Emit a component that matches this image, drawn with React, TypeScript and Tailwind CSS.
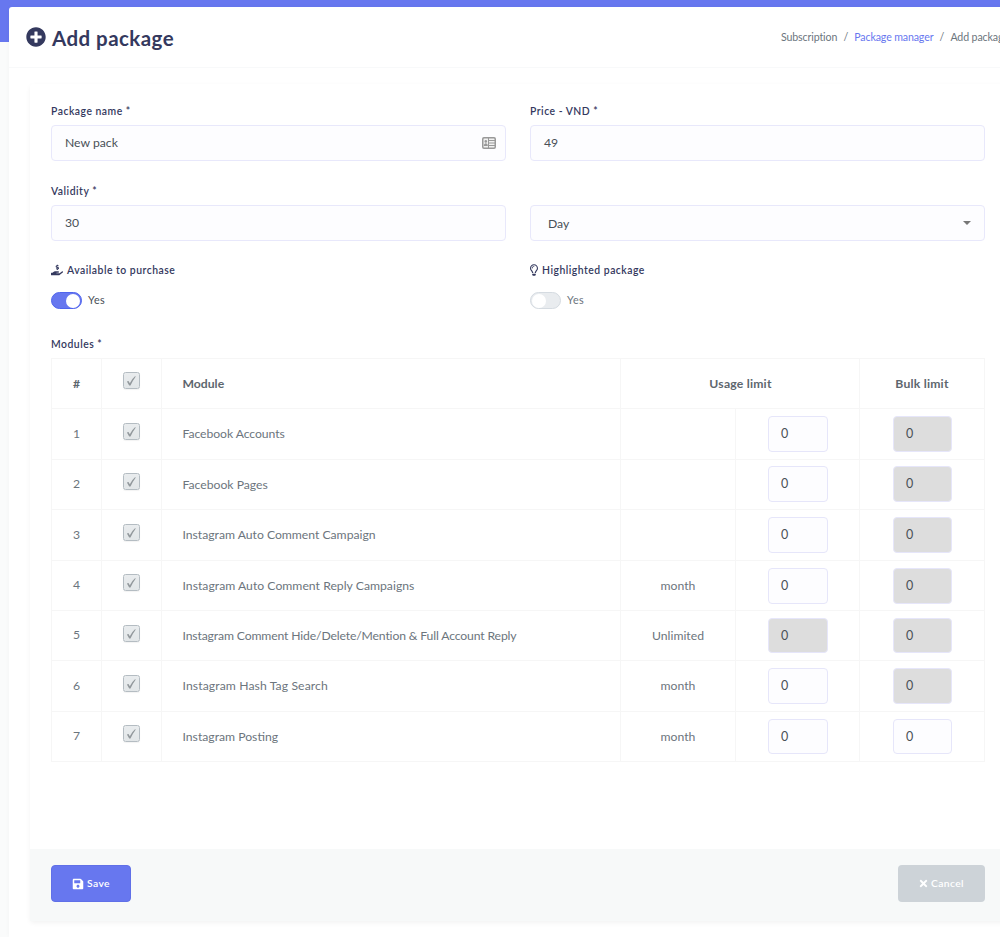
import React from "react";
import { FaPlusCircle, FaHandHoldingUsd, FaRegLightbulb, FaSave, FaTimes } from "react-icons/fa";

type Row = {
  name: string;
  spacing: string;
  unit: string;
  usageLocked?: boolean;
  bulkLocked: boolean;
  height: string;
  checkTop: string;
  inputTop: string;
  inputHeight: string;
};

const rows: Row[] = [
  { name: "Facebook Accounts", spacing: "tracking-[-0.07px]", unit: "", bulkLocked: true, height: "h-[51px]", checkTop: "pt-[14px]", inputTop: "pt-[7px]", inputHeight: "h-[36px]" },
  { name: "Facebook Pages", spacing: "", unit: "", bulkLocked: true, height: "h-[50px]", checkTop: "pt-[13px]", inputTop: "pt-[6px]", inputHeight: "h-[36px]" },
  { name: "Instagram Auto Comment Campaign", spacing: "tracking-[-0.01px]", unit: "", bulkLocked: true, height: "h-[51px]", checkTop: "pt-[14px]", inputTop: "pt-[7px]", inputHeight: "h-[36px]" },
  { name: "Instagram Auto Comment Reply Campaigns", spacing: "tracking-[0.02px]", unit: "month", bulkLocked: true, height: "h-[50px]", checkTop: "pt-[13px]", inputTop: "pt-[7px]", inputHeight: "h-[36px]" },
  { name: "Instagram Comment Hide/Delete/Mention & Full Account Reply", spacing: "tracking-[-0.145px]", unit: "Unlimited", usageLocked: true, bulkLocked: true, height: "h-[50px]", checkTop: "pt-[14px]", inputTop: "pt-[7px]", inputHeight: "h-[35px]" },
  { name: "Instagram Hash Tag Search", spacing: "tracking-[0.1px]", unit: "month", bulkLocked: true, height: "h-[51px]", checkTop: "pt-[14px]", inputTop: "pt-[7px]", inputHeight: "h-[36px]" },
  { name: "Instagram Posting", spacing: "", unit: "month", bulkLocked: false, height: "h-[50px]", checkTop: "pt-[13px]", inputTop: "pt-[7px]", inputHeight: "h-[35px]" },
];

const columns = "grid grid-cols-[50px_60px_459px_115px_124px_125px]";

function Label({ icon, children }: { icon?: React.ReactNode; children: React.ReactNode }) {
  return (
    <div className="flex h-4 items-center whitespace-nowrap text-[10.4px] font-semibold tracking-[0.5px] text-[#34395e]">
      {icon}
      <span className="pt-[2px]">{children}</span>
    </div>
  );
}

function Field({ value, children }: { value: string; children?: React.ReactNode }) {
  return (
    <div className="flex h-9 items-center justify-between rounded-[4px] border border-[#e8e8fb] bg-[#fdfdff] pr-[8px] pl-[13px] text-[12.2px] text-[#495057]">
      <span>{value}</span>
      {children}
    </div>
  );
}

function ContactCard() {
  return (
    <svg viewBox="0 0 14 12" className="mr-px h-[12px] w-[14px]">
      <rect x="0.75" y="0.75" width="12.5" height="10.5" rx="1.2" fill="#f1f1f1" stroke="#999999" strokeWidth="1.5" />
      <path d="M6.5 1v10" stroke="#999999" strokeWidth="1" />
      <path d="M7 3.5h6M7 6h6M7 8.500h6" stroke="#999999" strokeWidth="1.1" />
      <circle cx="3.800" cy="4.400" r="1.300" fill="#999999" />
      <path d="M1.800 9c0-3.600 4-3.600 4 0z" fill="#999999" />
    </svg>
  );
}

function Check() {
  return (
    <span className="flex size-[17px] shrink-0 items-center justify-center rounded-[2.5px] border border-[#b4bcc2] bg-gradient-to-b from-[#e9ecee] to-[#e2e6e8] shadow-[0_1px_1px_rgba(0,0,0,0.05)]">
      <svg viewBox="0 0 17 17" className="size-[17px] shrink-0">
        <path d="M3.9 9.600 L5.500 9 L6.800 11.200 Q8.800 6.900 12 4.200 L12.800 4.500 Q9.700 8.600 7.500 13.600 L6.200 13.600 Z" fill="#92989c" />
      </svg>
    </span>
  );
}

function Amount({ locked, size }: { locked?: boolean; size: string }) {
  return (
    <span className={`${size} ${locked ? "bg-[#dddddd]" : "bg-[#fdfdff]"} flex items-center rounded-[4px] border border-[#e6e6fa] pt-px pl-[12px] text-[12.5px] text-[#495057]`}>
      0
    </span>
  );
}

function Switch({ on }: { on: boolean }) {
  return (
    <span className={`${on ? "justify-end border-[#5065ee] bg-[#6777ef]" : "justify-start border-[#d5dbe1] bg-[#e9ecef]"} flex h-[17px] w-[31px] items-center rounded-full border px-px`}>
      <span className="size-[14px] rounded-full bg-white" />
    </span>
  );
}

export default function App() {
  return (
    <div className="h-[937px] w-[1000px] overflow-hidden bg-[#fafbfb] bg-[linear-gradient(#6777ef_42px,transparent_42px)] pt-[7px] pl-[9px] font-['Lato',sans-serif]">
      <div className="h-[930px] w-[1011px] rounded-tl-[3px] bg-white shadow-[0_0_5px_rgba(0,0,0,0.03)]">
        <header className="flex h-[61px] items-center border-b border-[#f8f9fa] pl-[17px]">
          <FaPlusCircle className="size-[20px] text-[#34395e]" />
          <h1 className="ml-[6px] w-[300px] whitespace-nowrap pt-[2px] text-[20.5px] leading-6 font-bold tracking-[0.45px] text-[#34395e]">Add package</h1>
          <nav className="ml-auto flex w-[239px] gap-[6.2px] whitespace-nowrap pt-[2px] text-[10.6px] tracking-[-0.12px] text-[#6c757d]">
            <span>Subscription</span>
            <span>/</span>
            <span className="text-[#6777ef]">Package manager</span>
            <span>/</span>
            <span>Add package</span>
          </nav>
        </header>

        <main className="mt-[16px] ml-[21px] flex h-[837px] flex-col rounded-[3px] bg-white shadow-[0_2px_5px_rgba(0,0,0,0.05)]">
          <div className="h-[765px] w-[955px] pt-[19px] pl-[21px]">
            <div className="grid w-[934px] grid-cols-[455px_455px] gap-x-6">
              <div>
                <Label>Package name *</Label>
                <div className="h-[6px]" />
                <Field value="New pack"><ContactCard /></Field>
              </div>
              <div>
                <Label>Price - VND *</Label>
                <div className="h-[6px]" />
                <Field value="49" />
              </div>
            </div>
            <div className="mt-[22px] grid w-[934px] grid-cols-[455px_455px] gap-x-6">
              <div>
                <Label>Validity *</Label>
                <div className="h-[6px]" />
                <Field value="30" />
              </div>
              <div className="pt-[22px]">
                <div className="flex h-9 items-center justify-between rounded-[4px] border border-[#e8e8fb] bg-[#fdfdff] pr-[13px] pl-[17px] text-[12.2px] text-[#495057]">
                  <span className="pt-[2px]">Day</span>
                  <span className="border-x-[4px] border-t-[4px] border-x-transparent border-t-[#777777]" />
                </div>
              </div>
            </div>
            <div className="mt-[21px] grid w-[934px] grid-cols-[455px_455px] gap-x-6">
              <div>
                <Label icon={<FaHandHoldingUsd className="mr-[4px] size-[12px]" />}>Available to purchase</Label>
                <div className="mt-[14px] flex items-center gap-[6px] text-[10.8px] tracking-[0.35px] text-[#495057]"><Switch on />Yes</div>
              </div>
              <div>
                <Label icon={<FaRegLightbulb className="mr-[4px] h-[12px] w-[8px]" />}>Highlighted package</Label>
                <div className="mt-[14px] flex items-center gap-[6px] text-[10.8px] tracking-[0.35px] text-[#6c757d]"><Switch on={false} />Yes</div>
              </div>
            </div>
            <div className="mt-[27px]"><Label>Modules *</Label></div>

            <div className="mt-[6px] w-[934px] border-r border-b border-[#f6f6f6] text-[12.2px] text-[#6c757d]">
              <div className="grid h-[50px] grid-cols-[50px_60px_459px_239px_125px] border-t border-[#f6f6f6] font-bold text-[#5d666e]">
                <div className="flex items-center justify-center border-l border-[#f6f6f6] pt-px">#</div>
                <div className="flex justify-center border-l border-[#f6f6f6] pt-[13px]"><Check /></div>
                <div className="flex items-center border-l border-[#f6f6f6] pt-px pl-[20.5px]">Module</div>
                <div className="flex items-center justify-center border-l border-[#f6f6f6] pt-px pl-px tracking-[0.2px]">Usage limit</div>
                <div className="flex items-center justify-center border-l border-[#f6f6f6] pt-px tracking-[0.2px]">Bulk limit</div>
              </div>
              {rows.map((row, i) => (
                <div key={row.name} className={`${columns} ${row.height} border-t border-[#f6f6f6]`}>
                  <div className="flex items-center justify-center border-l border-[#f6f6f6]">{i + 1}</div>
                  <div className={`${row.checkTop} flex justify-center border-l border-[#f6f6f6]`}><Check /></div>
                  <div className="flex items-center whitespace-nowrap border-l border-[#f6f6f6] pt-px pl-[20.5px]"><span className={row.spacing}>{row.name}</span></div>
                  <div className="flex items-center justify-center border-l border-[#f6f6f6] pt-px">{row.unit}</div>
                  <div className={`${row.inputTop} flex items-start border-l border-[#f6f6f6] pl-[32px]`}><Amount locked={row.usageLocked} size={`w-[60px] ${row.inputHeight}`} /></div>
                  <div className={`${row.inputTop} flex items-start border-l border-[#f6f6f6] pl-[33px]`}><Amount locked={row.bulkLocked} size={`w-[59px] ${row.inputHeight}`} /></div>
                </div>
              ))}
            </div>
          </div>
          <footer className="flex h-[72px] items-start justify-between bg-[#f7f9f9] pt-[16px] pr-[35px] pl-[21px]">
            <button className="flex h-[37px] w-[80px] items-center justify-center gap-[3px] rounded-[4px] border border-[#6070e8] bg-[#6777ef] text-[10.3px] font-semibold tracking-[0.4px] text-white"><FaSave className="size-[12px]" />Save</button>
            <button className="flex h-[37px] w-[87px] items-center justify-center gap-[2px] rounded-[4px] bg-[#cdd3d8] pr-px text-[10.3px] font-semibold tracking-[0.4px] text-white"><FaTimes className="size-[11px]" />Cancel</button>
          </footer>
        </main>
      </div>
    </div>
  );
}
